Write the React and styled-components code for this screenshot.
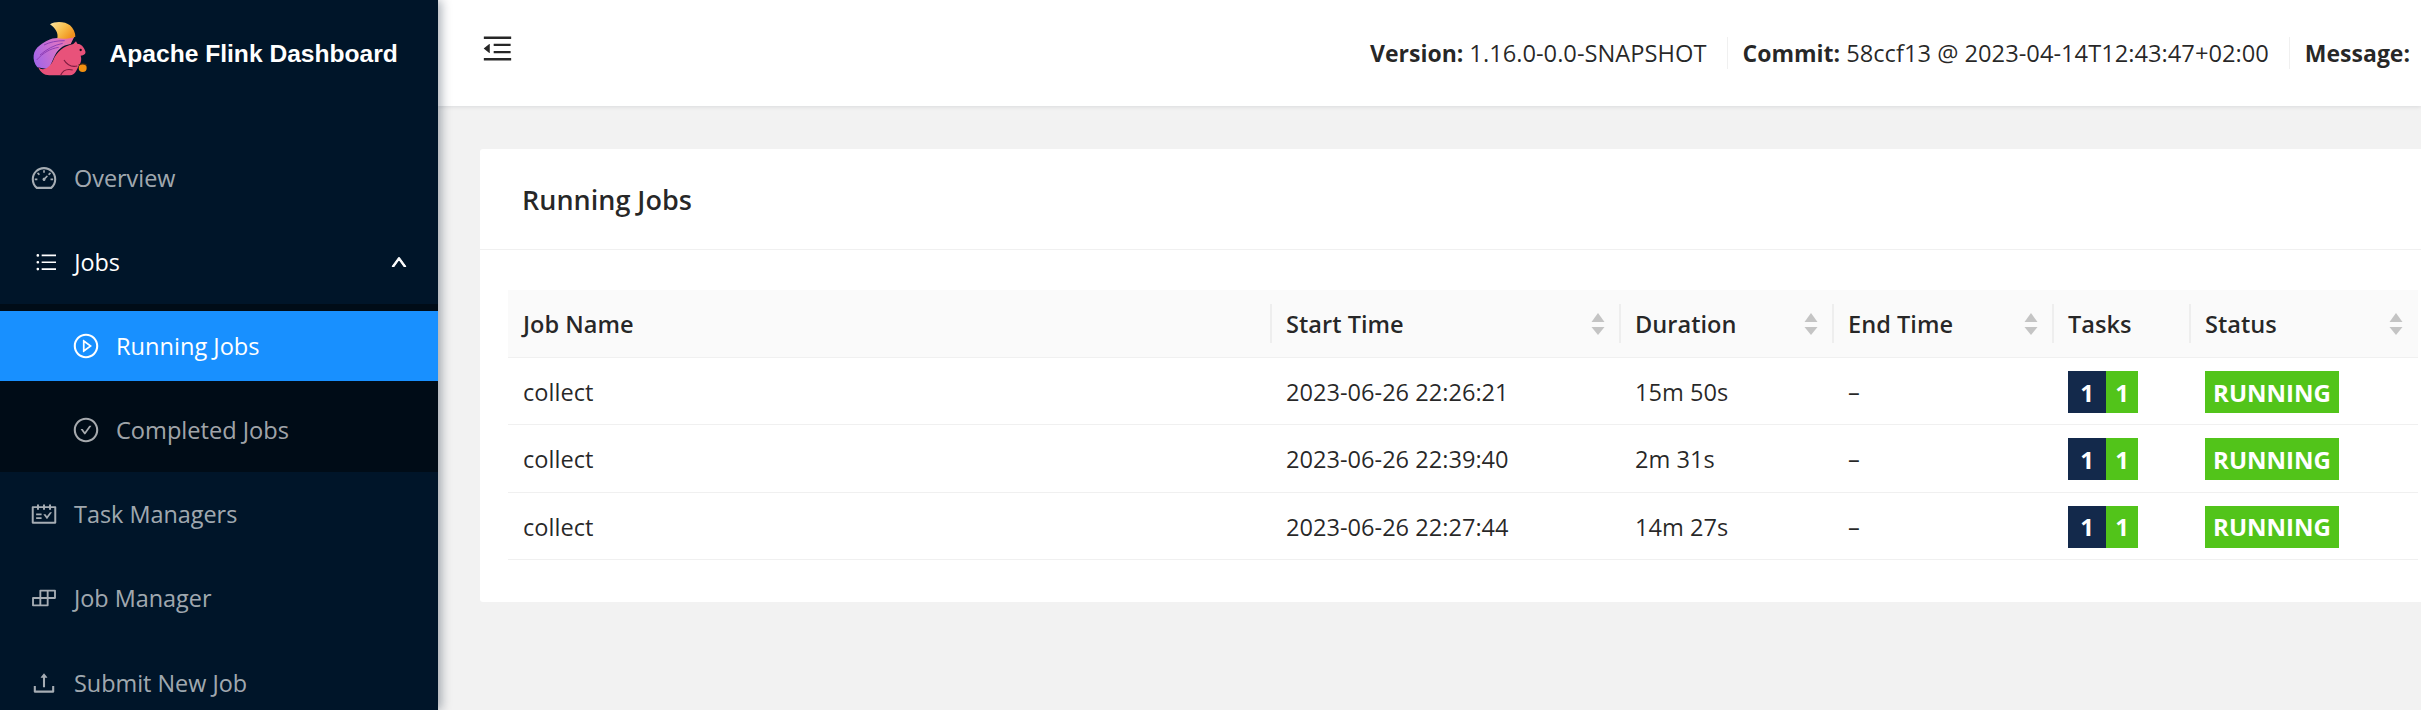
import React from "react";
import styled, { createGlobalStyle } from "styled-components";
import {
  AiOutlineDashboard,
  AiOutlineUnorderedList,
  AiOutlinePlayCircle,
  AiOutlineCheckCircle,
  AiOutlineSchedule,
  AiOutlineBuild,
  AiOutlineUpload,
  AiOutlineUp,
  AiOutlineMenuFold,
} from "react-icons/ai";

const GlobalStyle = createGlobalStyle`
  html, body {
    margin: 0;
    height: 100%;
    overflow: hidden;
    background: #f0f2f5;
    font-family: "Open Sans", "Noto Sans", sans-serif;
    color: rgba(0, 0, 0, 0.85);
  }
`;

const Layout = styled.div`
  display: flex;
  width: 2421px;
  height: 710px;
  overflow: hidden;
  background: #f2f2f2;
`;

const Sider = styled.aside`
  flex: 0 0 438px;
  background: #001529;
  box-shadow: 3px 0 10px rgba(0, 21, 41, 0.35);
  position: relative;
  z-index: 2;
`;

const Brand = styled.div`
  display: flex;
  align-items: center;
  height: 106px;
  padding-left: 20px;
  gap: 19.5px;
  margin-bottom: 30px;

  svg {
    margin-bottom: 16px;
  }
`;

const BrandName = styled.span`
  font-family: "Liberation Sans", Arial, sans-serif;
  font-weight: 700;
  font-size: 24.6px;
  margin-top: 2px;
  color: #fff;
`;

const MenuItem = styled.div`
  display: flex;
  align-items: center;
  height: ${(p) => (p.$open ? "83px" : "84.5px")};
  padding-left: 30px;
  padding-right: 30px;
  font-size: 23.4px;
  color: ${(p) => (p.$open ? "#fff" : "rgba(255, 255, 255, 0.65)")};

  svg {
    flex: none;
    font-size: 28px;
    margin-right: 16px;
  }
`;

const ListIcon = styled(AiOutlineUnorderedList)`
  && {
    font-size: 24.5px;
    margin-left: 3.7px;
  }
`;

const Chevron = styled(AiOutlineUp)`
  && {
    margin-left: auto;
    margin-right: 0;
    font-size: 18px;
    stroke: currentColor;
    stroke-width: 60;
  }
`;

const SubMenu = styled.div`
  display: flex;
  flex-direction: column;
  gap: 14px;
  background: #000c17;
  padding: 7px 0;
`;

const SubItem = styled.div`
  display: flex;
  align-items: center;
  height: 70px;
  padding-left: 72px;
  font-size: 23.6px;
  background: ${(p) => (p.$active ? "#1890ff" : "transparent")};
  color: ${(p) => (p.$active ? "#fff" : "rgba(255, 255, 255, 0.65)")};

  svg {
    flex: none;
    font-size: 28px;
    margin-right: 16px;
  }
`;

const Main = styled.div`
  flex: 1;
  min-width: 0;
`;

const Header = styled.header`
  display: flex;
  align-items: center;
  height: 106px;
  background: #fff;
  box-shadow: 0 1px 4px rgba(0, 21, 41, 0.1);
  padding-left: 42px;
  white-space: nowrap;
  position: relative;
`;

const Trigger = styled(AiOutlineMenuFold)`
  flex: none;
  font-size: 35px;
  margin-bottom: 10px;
  color: rgba(0, 0, 0, 0.85);
`;

const Meta = styled.div`
  display: flex;
  align-items: center;
  margin-left: 855px;
  margin-bottom: 1px;
  font-size: 23.7px;
`;

const MetaItem = styled.div`
  padding: 0 20px 0 ${(p) => (p.$first ? "0" : "15px")};
  border-left: ${(p) => (p.$first ? "none" : "1px solid #f0f0f0")};

  strong {
    font-size: 23px;
    font-weight: 700;
    margin-right: 6px;
  }
`;

const Content = styled.main`
  padding: 43px 0 0 42px;
`;

const Card = styled.section`
  width: 1966px;
  height: 453px;
  background: #fff;
  border-radius: 3px;
`;

const CardTitle = styled.h2`
  margin: 0;
  height: 101px;
  padding-left: 42px;
  box-sizing: border-box;
  display: flex;
  align-items: center;
  font-size: 27px;
  font-weight: 600;
  border-bottom: 1px solid #f0f0f0;
`;

const CardBody = styled.div`
  padding: 40px 28px 0;
`;

const Table = styled.table`
  width: 1910px;
  table-layout: fixed;
  border-collapse: collapse;
  font-size: 23.6px;
`;

const Th = styled.th`
  position: relative;
  height: 67px;
  padding: 0 15px;
  background: #fafafa;
  border-bottom: 1px solid #f0f0f0;
  text-align: left;
  font-weight: 600;

  &:not(:first-child)::before {
    content: "";
    position: absolute;
    left: -1px;
    top: 14px;
    bottom: 14px;
    width: 2px;
    background: #eeeeee;
  }
`;

const ThInner = styled.div`
  display: flex;
  align-items: center;
  justify-content: space-between;
`;

const Td = styled.td`
  height: 64.3px;
  padding: 2px 15px 0;
  border-bottom: 1px solid #f0f0f0;
`;

const TaskBadges = styled.div`
  display: flex;
`;

const Tag = styled.span`
  display: inline-flex;
  align-items: center;
  justify-content: center;
  height: 42px;
  width: ${(p) => p.$w}px;
  background: ${(p) => p.$bg};
  color: #fff;
  font-weight: 700;
  font-size: 24px;
`;

const columns = [
  { title: "Job Name", width: 763 },
  { title: "Start Time", width: 349, sort: true },
  { title: "Duration", width: 213, sort: true },
  { title: "End Time", width: 220, sort: true },
  { title: "Tasks", width: 137 },
  { title: "Status", width: 228, sort: true },
];

const jobs = [
  { name: "collect", start: "2023-06-26 22:26:21", duration: "15m 50s" },
  { name: "collect", start: "2023-06-26 22:39:40", duration: "2m 31s" },
  { name: "collect", start: "2023-06-26 22:27:44", duration: "14m 27s" },
];

const FlinkLogo = () => (
  <svg width="70" height="70" viewBox="0 0 210 210" aria-hidden="true">
    <defs>
      <linearGradient id="tail" x1="0" y1="0.6" x2="1" y2="0.3">
        <stop offset="0" stopColor="#a566e6" />
        <stop offset="0.6" stopColor="#d873c8" />
        <stop offset="1" stopColor="#ee6f96" />
      </linearGradient>
      <linearGradient id="crest" x1="0" y1="0" x2="1" y2="0.6">
        <stop offset="0" stopColor="#fbe6a6" />
        <stop offset="0.55" stopColor="#f8bf4c" />
        <stop offset="1" stopColor="#f0911d" />
      </linearGradient>
    </defs>
    <path d="M52 172C34 150 38 120 60 106C76 94 92 84 112 84C132 84 150 82 166 74L152 102C126 106 112 120 102 142L86 178Z" fill="url(#tail)" />
    <path d="M90 43C106 32 136 34 150 46C160 55 166 68 166 80C150 86 130 88 112 85C116 70 106 54 90 43Z" fill="url(#crest)" />
    <path d="M55 172C70 186 90 172 100 150C110 126 130 108 160 102L168 94L172 101C182 101 192 110 196 124C198 132 192 136 182 137C186 150 182 160 176 168C170 180 166 195 150 196L88 196C72 196 60 186 55 172Z" fill="#e8527a" />
    <path d="M60 135C80 118 100 106 128 100M50 150C70 128 90 116 116 112M72 105C90 96 110 92 134 92" stroke="#8e3fb6" strokeWidth="3" fill="none" />
    <path d="M132 150C142 166 156 172 172 168M122 196C128 182 142 176 158 180" stroke="#7d1c40" strokeWidth="3.5" fill="none" />
    <circle cx="188" cy="174" r="12" fill="#f29111" />
    <path d="M176 166C182 160 194 160 200 166" stroke="#4a2a10" strokeWidth="4" fill="none" />
    <circle cx="182" cy="120" r="3.5" fill="#1c1020" />
  </svg>
);

const SortIcon = () => (
  <svg width="14" height="22" viewBox="0 0 14 22" fill="#c4c4c4" aria-hidden="true">
    <path d="M7 0l6.5 9H.5z" />
    <path d="M.5 14h13L7 22z" />
  </svg>
);

export default function App() {
  return (
    <>
      <GlobalStyle />
      <Layout>
        <Sider>
          <Brand>
            <FlinkLogo />
            <BrandName>Apache Flink Dashboard</BrandName>
          </Brand>
          <MenuItem>
            <AiOutlineDashboard />
            Overview
          </MenuItem>
          <MenuItem $open>
            <ListIcon />
            Jobs
            <Chevron />
          </MenuItem>
          <SubMenu>
            <SubItem $active>
              <AiOutlinePlayCircle />
              Running Jobs
            </SubItem>
            <SubItem>
              <AiOutlineCheckCircle />
              Completed Jobs
            </SubItem>
          </SubMenu>
          <MenuItem>
            <AiOutlineSchedule />
            Task Managers
          </MenuItem>
          <MenuItem>
            <AiOutlineBuild />
            Job Manager
          </MenuItem>
          <MenuItem>
            <AiOutlineUpload />
            Submit New Job
          </MenuItem>
        </Sider>
        <Main>
          <Header>
            <Trigger />
            <Meta>
              <MetaItem $first>
                <strong>Version:</strong>1.16.0-0.0-SNAPSHOT
              </MetaItem>
              <MetaItem>
                <strong>Commit:</strong>58ccf13 @ 2023-04-14T12:43:47+02:00
              </MetaItem>
              <MetaItem>
                <strong>Message:</strong>
              </MetaItem>
            </Meta>
          </Header>
          <Content>
            <Card>
              <CardTitle>Running Jobs</CardTitle>
              <CardBody>
                <Table>
                  <colgroup>
                    {columns.map((c) => (
                      <col key={c.title} style={{ width: c.width }} />
                    ))}
                  </colgroup>
                  <thead>
                    <tr>
                      {columns.map((c) => (
                        <Th key={c.title}>
                          <ThInner>
                            {c.title}
                            {c.sort && <SortIcon />}
                          </ThInner>
                        </Th>
                      ))}
                    </tr>
                  </thead>
                  <tbody>
                    {jobs.map((job) => (
                      <tr key={job.start}>
                        <Td>{job.name}</Td>
                        <Td>{job.start}</Td>
                        <Td>{job.duration}</Td>
                        <Td>–</Td>
                        <Td>
                          <TaskBadges>
                            <Tag $bg="#13294b" $w={38}>1</Tag>
                            <Tag $bg="#52c41a" $w={32}>1</Tag>
                          </TaskBadges>
                        </Td>
                        <Td>
                          <Tag $bg="#52c41a" $w={134}>RUNNING</Tag>
                        </Td>
                      </tr>
                    ))}
                  </tbody>
                </Table>
              </CardBody>
            </Card>
          </Content>
        </Main>
      </Layout>
    </>
  );
}
